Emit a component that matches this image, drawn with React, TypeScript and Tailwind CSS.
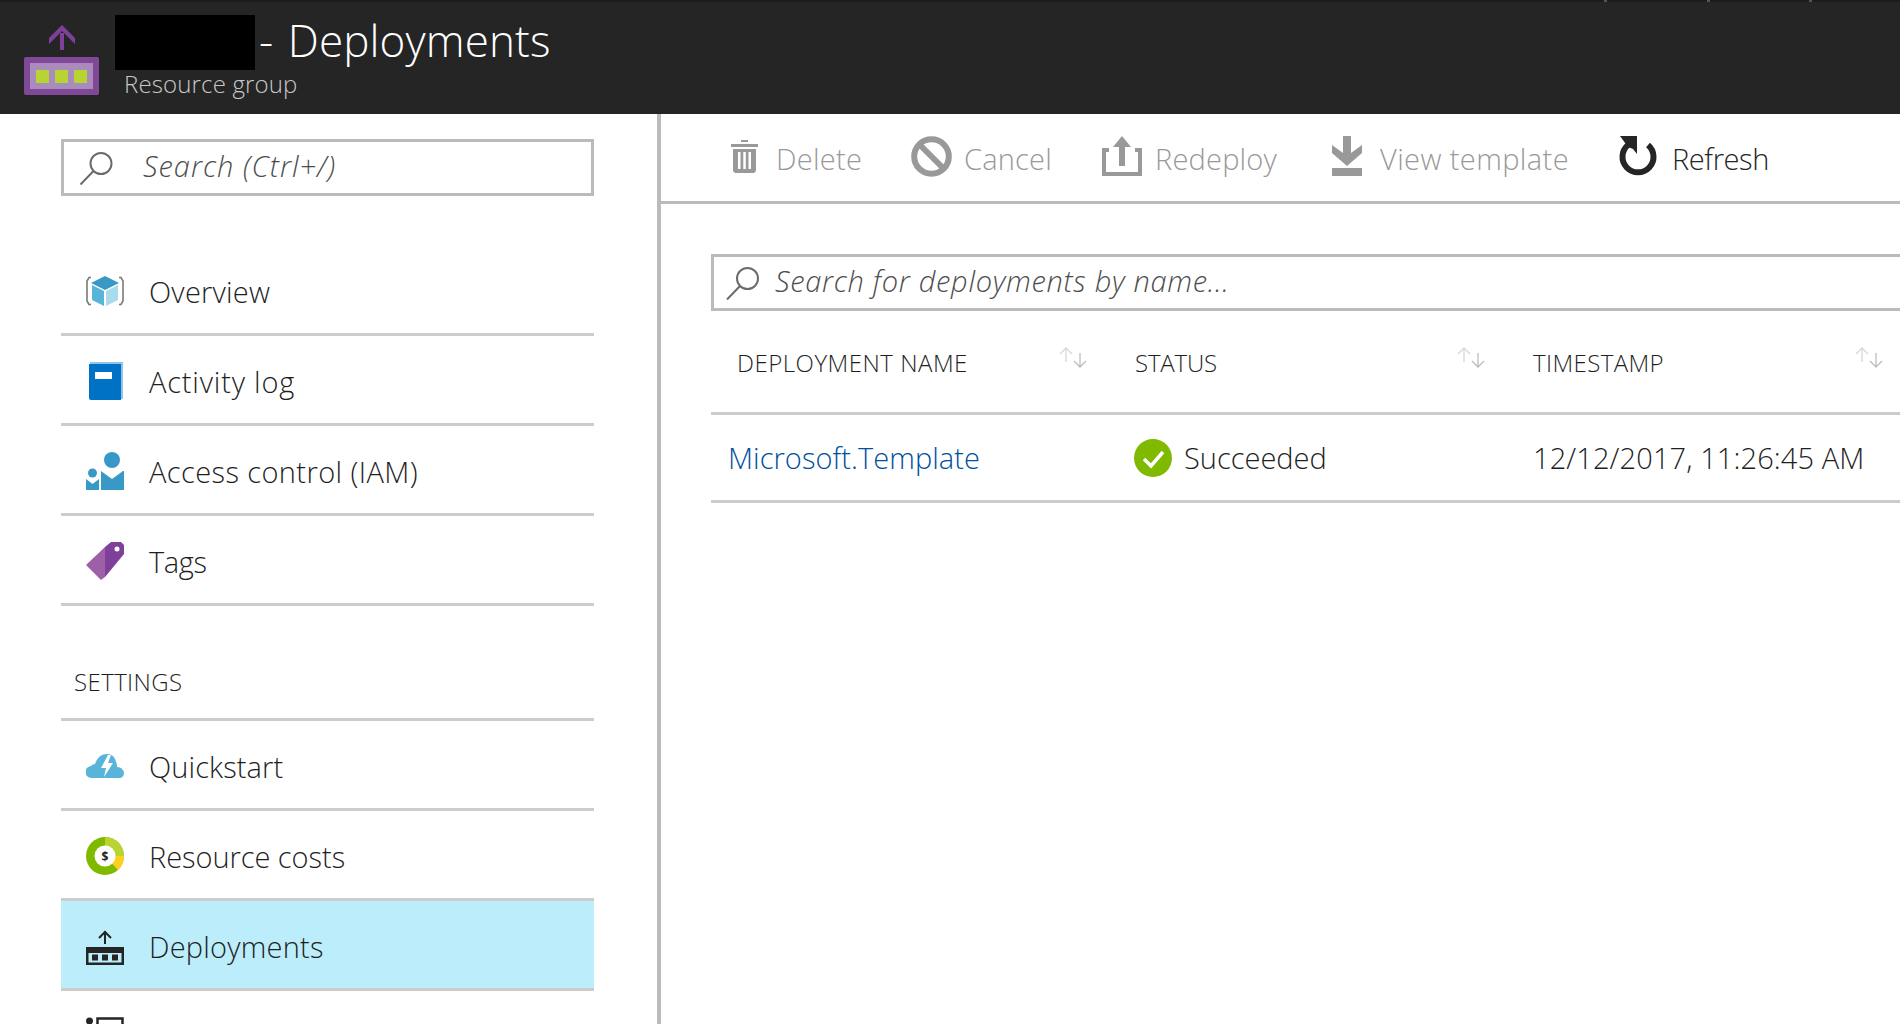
import type { ReactNode } from 'react';

function SearchIcon({ className }: { className: string }) {
  return (
    <svg viewBox="0 0 34 34" className={className} fill="none" stroke="#6b6b6b" strokeWidth="2">
      <circle cx="21.5" cy="12.5" r="10.5" />
      <path d="M14 20 1 33.5" />
    </svg>
  );
}

function OverviewIcon() {
  return (
    <svg viewBox="0 0 38 30" className="w-[38px] h-[30px]">
      <path d="M5 1.5H3L1 5v20l2 3.5h2M33 1.5h2l2 3.5v20l-2 3.5h-2" fill="none" stroke="#7a7a7a" strokeWidth="1.6" />
      <path d="M19 0 33 7 19 14 5 7z" fill="#3999c6" />
      <path d="M6 9l12 6v15L6 24z" fill="#59b4d9" />
      <path d="M32 9l-12 6v15l12-6z" fill="#a9dbef" />
    </svg>
  );
}

function ActivityIcon() {
  return (
    <svg viewBox="0 0 35 38" className="w-[35px] h-[38px]">
      <path d="M2 0h33v37h-2V2H2z" fill="#8cc4ea" />
      <path d="M1 2h32v36H3a2 2 0 0 1-2-2z" fill="#0072c6" />
      <rect x="7" y="10" width="17" height="7" fill="#fff" />
    </svg>
  );
}

function AccessIcon() {
  return (
    <svg viewBox="0 0 38 38" className="w-[38px] h-[38px]" fill="#3999c6">
      <ellipse cx="26" cy="8" rx="8" ry="8" />
      <path d="M15 19l11 8 11-8h1v19H15z" />
      <ellipse cx="6.500" cy="21" rx="4.500" ry="4.500" />
      <path d="M0 27l6.500 5 6.500-5v11H0z" />
    </svg>
  );
}

function TagIcon() {
  return (
    <svg viewBox="0 0 38 38" className="w-[38px] h-[38px]">
      <path d="M0 23 19 5v30l-4 3z" fill="#9d5fa8" />
      <path d="M19 5l6-5h10l3 3v9L19 35z" fill="#7f4099" />
      <circle cx="31" cy="7" r="2.500" fill="#fff" />
    </svg>
  );
}

function QuickstartIcon() {
  return (
    <svg viewBox="0 0 38 24" className="w-[38px] h-[24px]">
      <path d="M6 24a6 6 0 0 1-1-12c1-1 2-2 4-2 2-6 6-10 12-10 5 0 8 3 9 8 1 2 1 3 1 5 4 0 7 3 7 6s-2 5-5 5z" fill="#59b4d9" />
      <path d="M22 1l-7 13h5l-2 9 9-14h-5l3-8z" fill="#fff" />
    </svg>
  );
}

function CostsIcon() {
  return (
    <svg viewBox="0 0 38 38" className="w-[38px] h-[38px]">
      <circle cx="19" cy="19" r="19" fill="#7fba00" />
      <path d="M19 0a19 19 0 0 1 19 19v4L19 19z" fill="#b8d432" />
      <path d="M38 19a19 19 0 0 1-6 14L19 19z" fill="#ffd01f" />
      <circle cx="19" cy="19" r="10.500" fill="#fff" />
      <text x="19" y="23.500" textAnchor="middle" fontSize="12" fontWeight="700" fill="#252525" fontFamily="'Open Sans', sans-serif">$</text>
    </svg>
  );
}

function DeployIcon() {
  return (
    <svg viewBox="0 0 38 35" className="w-[38px] h-[35px] mt-[3px]" fill="#252525">
      <path d="M19 1v13" fill="none" stroke="#252525" strokeWidth="2" />
      <path d="M13 8l6-6 6 6" fill="none" stroke="#252525" strokeWidth="2" />
      <path d="M0 17h38v18H0zm2.500 6v9.500h33V23z" fillRule="evenodd" />
      <rect x="6" y="24.500" width="6" height="6" />
      <rect x="16" y="24.500" width="6" height="6" />
      <rect x="26" y="24.500" width="6" height="6" />
    </svg>
  );
}

function PropertiesIcon() {
  return (
    <svg viewBox="0 0 38 38" className="w-[38px] h-[38px]">
      <circle cx="3.500" cy="4" r="3.500" fill="#252525" />
      <rect x="11.500" y="1.500" width="25" height="12" fill="none" stroke="#252525" strokeWidth="2.500" />
    </svg>
  );
}

function TrashIcon() {
  return (
    <svg viewBox="0 0 27 33" className="w-[27px] h-[33px]" fill="#999">
      <path d="M10 0h7v2h-7zM0 4h27v3H0z" />
      <path d="M2 9h23v22l-2 2H4l-2-2zm5 3v17h2.500V12zm5.300 0v17h2.500V12zm5.200 0v17H20V12z" fillRule="evenodd" />
    </svg>
  );
}

function CancelIcon() {
  return (
    <svg viewBox="0 0 41 41" className="w-[41px] h-[41px]" fill="none" stroke="#999" strokeWidth="6">
      <circle cx="20.500" cy="20.500" r="17.300" />
      <path d="M8 8l25 25" />
    </svg>
  );
}

function RedeployIcon() {
  return (
    <svg viewBox="0 0 40 40" className="w-[40px] h-[40px]" fill="#999">
      <path d="M0 12h7v4H4v20h32V16h-3v-4h7v28H0z" />
      <path d="M20 0l9 11h-6v19h-6V11h-6z" />
    </svg>
  );
}

function ViewIcon() {
  return (
    <svg viewBox="0 0 30 40" className="w-[30px] h-[40px]" fill="#999">
      <path d="M11 0h8v17l11-8v8L15 30 0 17V9l11 8z" />
      <rect y="32" width="30" height="8" />
    </svg>
  );
}

function RefreshIcon() {
  return (
    <svg viewBox="0 0 38 40" className="w-[38px] h-[40px]">
      <path d="M9 9a15.500 15.500 0 1 0 20 0" fill="none" stroke="#252525" strokeWidth="6" />
      <path d="M1 0h17v18L14 13 9 11z" fill="#252525" />
    </svg>
  );
}

function SortIcon() {
  return (
    <svg viewBox="0 0 28 21" className="w-[28px] h-[21px]" fill="none" strokeWidth="1.300">
      <path d="M7 15V1M1 7l6-6 6 6" stroke="#d8d8d8" />
      <path d="M21 6v14M15 14l6 6 6-6" stroke="#bdbdbd" />
    </svg>
  );
}

type NavItem = { label: string; icon: ReactNode; tracking: string; active?: boolean };

const MAIN_ITEMS: NavItem[] = [
  { label: 'Overview', icon: <OverviewIcon />, tracking: 'tracking-[0.2px]' },
  { label: 'Activity log', icon: <ActivityIcon />, tracking: 'tracking-[0.8px]' },
  { label: 'Access control (IAM)', icon: <AccessIcon />, tracking: 'tracking-[0.4px]' },
  { label: 'Tags', icon: <TagIcon />, tracking: 'tracking-[-0.4px]' },
];

const SETTINGS_ITEMS: NavItem[] = [
  { label: 'Quickstart', icon: <QuickstartIcon />, tracking: 'tracking-[0.1px]' },
  { label: 'Resource costs', icon: <CostsIcon />, tracking: 'tracking-[-0.05px]' },
  { label: 'Deployments', icon: <DeployIcon />, tracking: 'tracking-[0.2px]', active: true },
  { label: '', icon: <PropertiesIcon />, tracking: '' },
];

const TOOLBAR = [
  { label: 'Delete', icon: <TrashIcon />, box: 'w-[180px] gap-[18px]', text: 'text-[#999] tracking-[0.3px]' },
  { label: 'Cancel', icon: <CancelIcon />, box: 'w-[191px] gap-[12px]', text: 'text-[#999] tracking-[0.2px]' },
  { label: 'Redeploy', icon: <RedeployIcon />, box: 'w-[230px] gap-[13px]', text: 'text-[#999] tracking-[0.2px]' },
  { label: 'View template', icon: <ViewIcon />, box: 'w-[287px] gap-[18px]', text: 'text-[#999] tracking-[0.4px]' },
  { label: 'Refresh', icon: <RefreshIcon />, box: 'gap-[15px]', text: 'text-[#252525] tracking-[-0.4px]' },
];

const COLUMNS = [
  { label: 'DEPLOYMENT NAME', tracking: 'tracking-[0.5px]' },
  { label: 'STATUS', tracking: 'tracking-[-0.2px]' },
  { label: 'TIMESTAMP', tracking: 'tracking-[0.4px]' },
];

function NavRow({ label, icon, tracking, active }: NavItem) {
  return (
    <div className={`flex h-[90px] items-center gap-[25px] border-b-[3px] border-[#ccc] pl-[25px] ${active ? 'bg-[#bcedfb]' : ''}`}>
      <div className="mt-[3px] flex w-[38px] justify-center">{icon}</div>
      <span className={`mt-[5px] text-[29px] font-light text-[#1f1f1f] ${tracking}`}>{label}</span>
    </div>
  );
}

export default function App() {
  return (
    <div className="flex h-[1024px] flex-col overflow-hidden bg-white font-['Open_Sans',sans-serif]">
      <header className="relative flex h-[114px] shrink-0 items-start border-t-2 border-[#1c1c1c] bg-[#252525]">
        <div className="absolute left-[1604px] -top-[2px] h-[2px] w-[3px] bg-[#555]" />
        <div className="absolute left-[1707px] -top-[2px] h-[2px] w-[3px] bg-[#555]" />
        <div className="absolute left-[1809px] -top-[2px] h-[2px] w-[3px] bg-[#555]" />
        <div className="ml-[24px] mt-[23px] flex w-[75px] flex-col items-center gap-[7px]">
          <svg viewBox="0 0 26 25" className="w-[26px] h-[25px]" fill="#7f4099">
            <path d="M11 8h4v17h-4z" />
            <path d="M13 0l13 13v6L13 6 0 19v-6z" />
          </svg>
          <div className="flex h-[38px] w-[75px] rounded-[2px] bg-[#804998] p-[6px]">
            <div className="flex flex-1 items-center justify-center gap-[6px] bg-[#a98bbd]">
              <div className="h-[13px] w-[13px] bg-[#b8d432]" />
              <div className="h-[13px] w-[13px] bg-[#b8d432]" />
              <div className="h-[13px] w-[13px] bg-[#b8d432]" />
            </div>
          </div>
        </div>
        <div className="ml-[16px] mt-[13px] flex flex-col">
          <div className="flex items-start">
            <div className="h-[55px] w-[140px] bg-black" />
            <h1 className="ml-[4px] text-[44px] leading-[51px] font-light tracking-[0.1px] [word-spacing:3px] text-white">- Deployments</h1>
          </div>
          <span className="ml-[9px] text-[24px] leading-[28px] font-light tracking-[0.15px] text-[#c8c8c8]">Resource group</span>
        </div>
      </header>

      <div className="flex min-h-0 flex-1">
        <aside className="w-[657px] shrink-0 pl-[61px] pr-[63px] pt-[25px]">
          <div className="flex h-[57px] items-center gap-[29px] border-[3px] border-[#bbb] pl-[15px]">
            <SearchIcon className="w-[35px] h-[34px]" />
            <span className="-mt-[4px] text-[29px] font-light italic tracking-[1px] text-[#4d4d4d]">Search (Ctrl+/)</span>
          </div>
          <div className="mt-[50px]">
            {MAIN_ITEMS.map((item) => (
              <NavRow key={item.label} {...item} />
            ))}
          </div>
          <div className="flex h-[115px] items-end border-b-[3px] border-[#ccc] pb-[18px] pl-[13px]">
            <span className="text-[24px] font-light tracking-[0.4px] text-[#1f1f1f]">SETTINGS</span>
          </div>
          {SETTINGS_ITEMS.map((item) => (
            <NavRow key={item.label} {...item} />
          ))}
        </aside>

        <main className="min-w-0 flex-1 overflow-hidden border-l-4 border-[#bbb]">
          <div className="flex h-[90px] items-center border-b-[3px] border-[#bbb] pb-[3px] pl-[70px]">
            {TOOLBAR.map((t) => (
              <div key={t.label} className={`flex shrink-0 items-center ${t.box}`}>
                {t.icon}
                <span className={`mt-[6px] text-[29px] font-light ${t.text}`}>{t.label}</span>
              </div>
            ))}
          </div>

          <div className="pl-[50px] pt-[50px]">
            <div className="flex h-[57px] items-center gap-[14px] border-y-[3px] border-l-[3px] border-[#bbb] pl-[11px]">
              <SearchIcon className="w-[36px] h-[34px]" />
              <span className="-mt-[3px] text-[29px] font-light italic tracking-[0.7px] text-[#4d4d4d]">Search for deployments by name...</span>
            </div>

            <div className="grid h-[104px] grid-cols-[398px_398px_393px] items-center border-b-[3px] border-[#ccc]">
              {COLUMNS.map((c) => (
                <div key={c.label} className="flex items-center justify-between pl-[26px] pr-[22px] last:pr-[17px]">
                  <span className={`mt-[2px] text-[24px] font-light text-[#1f1f1f] ${c.tracking}`}>{c.label}</span>
                  <span className="-mt-[8px]"><SortIcon /></span>
                </div>
              ))}
            </div>

            <div className="grid h-[88px] grid-cols-[398px_398px_393px] items-center border-b-[3px] border-[#ccc]">
              <a className="pl-[17px] text-[29px] font-light tracking-[0.05px] text-[#004fa0]">Microsoft.Template</a>
              <div className="flex items-center gap-[12px] pl-[25px]">
                <svg viewBox="0 0 38 38" className="w-[38px] h-[38px]">
                  <circle cx="19" cy="19" r="19" fill="#7fba00" />
                  <path d="M10 20l7 7 12-14" fill="none" stroke="#fff" strokeWidth="3.500" />
                </svg>
                <span className="text-[29px] font-light text-[#1f1f1f]">Succeeded</span>
              </div>
              <span className="pl-[26px] text-[29px] font-light tracking-[0.1px] text-[#1f1f1f]">12/12/2017, 11:26:45 AM</span>
            </div>
          </div>
        </main>
      </div>
    </div>
  );
}
